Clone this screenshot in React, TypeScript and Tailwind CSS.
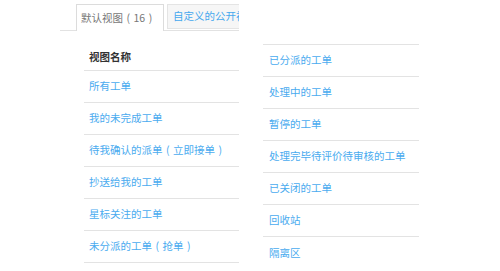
const leftViews = [
  ['所有工单'],
  ['我的未完成工单'],
  ['待我确认的派单', '立即接单'],
  ['抄送给我的工单'],
  ['星标关注的工单'],
  ['未分派的工单', '抢单'],
]

const rightViews = [
  '已分派的工单',
  '处理中的工单',
  '暂停的工单',
  '处理完毕待评价待审核的工单',
  '已关闭的工单',
  '回收站',
  '隔离区',
]

function Label({ text, note }: { text: string; note?: string }) {
  return (
    <span className="whitespace-nowrap">
      {text}
      {note !== undefined && (
        <>
          <span className="inline-block w-[1em] text-center">(</span>
          {note}
          <span className="inline-block w-[1em] text-center">)</span>
        </>
      )}
    </span>
  )
}

export default function App() {
  return (
    <div
      className="w-[500px] h-[271px] bg-white flex overflow-hidden text-[10.5px] leading-none"
      style={{ fontFamily: '"Noto Sans CJK SC", "Noto Sans", sans-serif' }}
    >
      <div className="ml-[60px] w-[179px] shrink-0 flex flex-col overflow-hidden">
        <div className="h-[31px] pt-[4px] border-b border-[#e2e2e2] flex items-start">
          <div className="ml-[16px] w-[88px] h-[27px] shrink-0 bg-white border border-b-0 border-[#dcdcdc] flex items-center pl-[4px] text-[#777]">
            <Label text="默认视图" note="16" />
          </div>
          <div className="ml-[3px] h-[25px] shrink-0 bg-[#f6f6f6] border border-[#e4e4e4] flex items-center pl-[5px] pr-3 text-[#45a8ee]">
            <Label text="自定义的公开视图" note="0" />
          </div>
        </div>

        <div className="ml-[24px] mt-[13px] w-[155px]">
          <div className="h-[27px] border-b border-[#e3e3e3] flex items-center pl-[5px] font-bold text-[#333]">
            视图名称
          </div>
          {leftViews.map(([text, note]) => (
            <div key={text} className="h-[32px] border-b border-[#e3e3e3] flex items-center pl-[5px] text-[#4aabef]">
              <Label text={text} note={note} />
            </div>
          ))}
        </div>
      </div>

      <div className="ml-[24px] mt-[44px] w-[156px] shrink-0 self-start border-t border-[#e3e3e3]">
        {rightViews.map((v, i) => (
          <div
            key={v}
            className={
              i === rightViews.length - 1
                ? 'h-[32px] flex items-center pl-[6px] text-[#4aabef] whitespace-nowrap'
                : 'h-[32px] border-b border-[#e3e3e3] flex items-center pl-[6px] text-[#4aabef] whitespace-nowrap'
            }
          >
            {v}
          </div>
        ))}
      </div>
    </div>
  )
}
